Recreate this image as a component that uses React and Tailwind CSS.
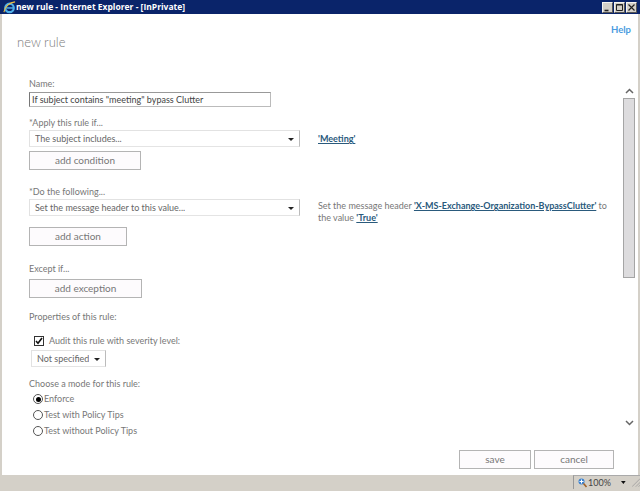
const FONT = "font-['Lato',sans-serif]";

function Label({ className = "", children }) {
  return <div className={`text-[9px] leading-[14px] text-[#777] ${className}`}>{children}</div>;
}

function LinkText({ children }) {
  return <a className="font-bold text-[#2a5a7c] underline">{children}</a>;
}

function SelectBox({ value, className = "" }) {
  return (
    <div className={`flex items-center justify-between border border-[#e2e2e2] border-r-[#bbb] border-b-[#e4e4e4] bg-white text-[9px] text-[#666] ${className}`}>
      <span className="truncate">{value}</span>
      <svg width="6" height="3" viewBox="0 0 6 3" className="mr-[5px] mt-[2px] shrink-0">
        <path d="M0 0h6L3 3z" fill="#222" />
      </svg>
    </div>
  );
}

function OutlineButton({ width, children }) {
  return (
    <button
      type="button"
      className={`flex items-center justify-center border border-[#b4b4b4] bg-[#fdfbfd] text-[10px] text-[#777] ${width}`}
    >
      {children}
    </button>
  );
}

function Radio({ checked, label }) {
  return (
    <div className="flex h-[16px] items-center pl-[4px]">
      <span className="flex h-[10px] w-[10px] items-center justify-center rounded-full border border-[#555] bg-white">
        {checked && <span className="h-[5px] w-[5px] rounded-full bg-black" />}
      </span>
      <span className="ml-[1px] text-[9px] text-[#777]">{label}</span>
    </div>
  );
}

function WindowButton({ children }) {
  return (
    <div className="flex h-[11px] w-[11px] items-center justify-center border border-[#f5f4f0] border-r-[#555] border-b-[#555] bg-[#d4d0c8]">
      <svg width="9" height="9" viewBox="0 0 9 9" fill="none" stroke="#222">
        {children}
      </svg>
    </div>
  );
}

export default function App() {
  return (
    <div className={`flex h-[491px] w-[640px] flex-col overflow-hidden bg-[#d4d0c8] ${FONT}`}>
      {/* title bar */}
      <div className="flex h-[14px] shrink-0 items-center justify-between bg-[#0a246a] pl-[3px] pr-[3px]">
        <div className="flex items-center">
          <svg width="13" height="13" viewBox="0 0 14 14" className="shrink-0">
            <circle cx="7" cy="7.5" r="4.6" fill="none" stroke="#4fb0e8" strokeWidth="2.4" />
            <path d="M3.5 7.5h7.5" stroke="#4fb0e8" strokeWidth="1.6" />
            <path d="M1 12C2 6 7 1.5 13 1" fill="none" stroke="#f0c040" strokeWidth="1.2" />
          </svg>
          <span className="font-['Open_Sans',sans-serif] text-[8.5px] font-bold leading-[14px] text-white">
            new rule - Internet Explorer - [InPrivate]
          </span>
        </div>
        <div className="flex gap-[1px]">
          <WindowButton>
            <path d="M1.5 7.5h4" strokeWidth="1.6" />
          </WindowButton>
          <WindowButton>
            <path d="M1.5 1.5h6v6h-6zM1.5 2h6" />
          </WindowButton>
          <WindowButton>
            <path d="M1.5 1.5l6 6M7.5 1.5l-6 6" strokeWidth="1.2" />
          </WindowButton>
        </div>
      </div>

      {/* page */}
      <div className="mx-[2px] flex min-h-0 flex-1 flex-col bg-white">
        <div className="flex h-[63px] shrink-0 justify-between pl-[15px] pr-[7px]">
          <div className="mt-[18px] text-[13px] font-light leading-[20px] text-[#7a7a7a]">new rule</div>
          <a className="mt-[9px] text-[9.5px] font-bold leading-[14px] text-[#4a9ce0]">Help</a>
        </div>

        <div className="flex min-h-0 flex-1">
          {/* form */}
          <div className="min-w-0 flex-1 pl-[27px]">
            <Label>Name:</Label>
            <input
              readOnly
              value={'If subject contains "meeting" bypass Clutter'}
              className="mt-[1px] block h-[15px] w-[242px] border border-[#bbb] border-l-[#777] border-t-[#999] bg-white pl-[2px] text-[9px] text-[#444] outline-none"
            />

            <Label className="mt-[9px]">*Apply this rule if...</Label>
            <div className="flex h-[17px]">
              <SelectBox value="The subject includes..." className="w-[271px] pl-[5px]" />
              <div className="ml-[18px] text-[9px] leading-[17px]">
                <LinkText>'Meeting'</LinkText>
              </div>
            </div>
            <div className="mt-[4px] flex h-[19px]">
              <OutlineButton width="w-[112px]">add condition</OutlineButton>
            </div>

            <Label className="mt-[15px]">*Do the following...</Label>
            <div className="flex h-[17px]">
              <SelectBox value="Set the message header to this value..." className="w-[271px] shrink-0 pl-[5px]" />
              <div className="ml-[18px] w-[292px] shrink-0 pt-[1px] text-[9px] leading-[12px] text-[#777]">
                Set the message header <LinkText>'X-MS-Exchange-Organization-BypassClutter'</LinkText> to the value{" "}
                <LinkText>'True'</LinkText>
              </div>
            </div>
            <div className="mt-[11px] flex h-[19px]">
              <OutlineButton width="w-[98px]">add action</OutlineButton>
            </div>

            <Label className="mt-[16px]">Except if...</Label>
            <div className="mt-[3px] flex h-[19px]">
              <OutlineButton width="w-[113px]">add exception</OutlineButton>
            </div>

            <Label className="mt-[12px]">Properties of this rule:</Label>
            <div className="mt-[10px] flex h-[13px] items-center pl-[5px]">
              <span className="flex h-[10px] w-[10px] items-center justify-center border border-[#333] bg-white">
                <svg width="8" height="8" viewBox="0 0 8 8" fill="none" stroke="#111" strokeWidth="1.6">
                  <path d="M1 4l2 2.2L7 1" />
                </svg>
              </span>
              <span className="ml-[5px] text-[9px] text-[#777]">Audit this rule with severity level:</span>
            </div>
            <SelectBox value="Not specified" className="ml-[2px] mt-[3px] h-[17px] w-[75px] pl-[5px]" />

            <Label className="mt-[10px]">Choose a mode for this rule:</Label>
            <div>
              <Radio checked label="Enforce" />
              <Radio label="Test with Policy Tips" />
              <Radio label="Test without Policy Tips" />
            </div>
          </div>

          {/* scrollbar */}
          <div className="flex w-[16px] shrink-0 flex-col items-center pr-[2px]">
            <svg width="9" height="6" viewBox="0 0 9 6" className="mt-[11px]" fill="none" stroke="#666" strokeWidth="1.5">
              <path d="M1 5l3.5-3.5L8 5" />
            </svg>
            <div className="mt-[4px] h-[180px] w-[12px] border border-[#a5a5a5] bg-[#dddcde]" />
            <svg width="9" height="6" viewBox="0 0 9 6" className="mt-[142px]" fill="none" stroke="#666" strokeWidth="1.5">
              <path d="M1 1l3.5 3.5L8 1" />
            </svg>
          </div>
        </div>

        {/* footer */}
        <div className="flex h-[25px] shrink-0 justify-end gap-[3px] pr-[24px]">
          <div className="flex h-[19px] gap-[3px]">
            <OutlineButton width="w-[72px]">save</OutlineButton>
            <OutlineButton width="w-[80px]">cancel</OutlineButton>
          </div>
        </div>
      </div>

      {/* status bar */}
      <div className="flex h-[16px] shrink-0 justify-end">
        <div className="flex h-[14px] w-[67px] items-center border-l border-t border-l-[#999] border-t-[#aaa] pl-[4px]">
          <svg width="9" height="10" viewBox="0 0 9 10" className="shrink-0">
            <circle cx="3.5" cy="3.5" r="3" fill="#3b82d0" />
            <path d="M1.5 3.5h4M3.5 1.5v4" stroke="#fff" />
            <path d="M5.5 5.5L8.5 9" stroke="#a0622a" strokeWidth="1.6" />
          </svg>
          <span className="ml-[1px] text-[9px] text-[#444]">100%</span>
          <svg width="5" height="3" viewBox="0 0 5 3" className="ml-[10px]">
            <path d="M0 0h5L2.5 3z" fill="#111" />
          </svg>
          <svg width="9" height="9" viewBox="0 0 9 9" className="ml-[6px]" stroke="#999" strokeWidth="0.8">
            <path d="M0 9l9-9M4 9l5-5M7 9l2-2" />
          </svg>
        </div>
      </div>
    </div>
  );
}
